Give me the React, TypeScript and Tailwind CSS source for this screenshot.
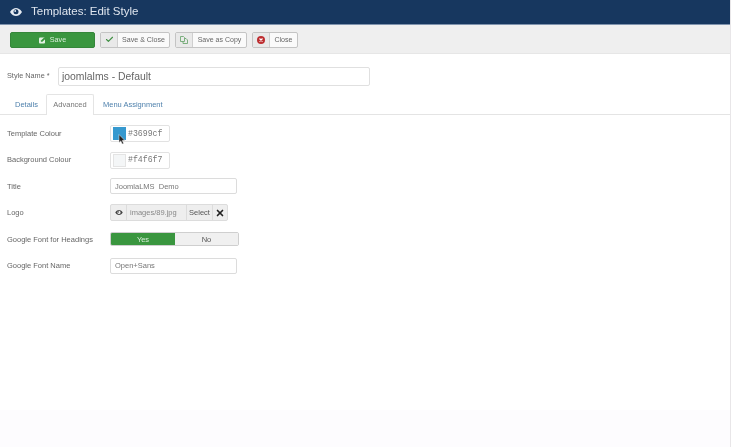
import { Check, X } from "lucide-react";

const sans = "font-['Liberation_Sans',Arial,sans-serif]";

function EyeGlyph({ width, height, colour, pupil }: { width: number; height: number; colour: string; pupil: string }) {
  return (
    <svg width={width} height={height} viewBox="0 0 12 8">
      <path d="M0 4 C2 1 4 0 6 0 C8 0 10 1 12 4 C10 7 8 8 6 8 C4 8 2 7 0 4 Z" fill={colour} />
      <circle cx="6" cy="3.8" r="2.5" fill={pupil} />
      <circle cx="5.2" cy="3" r="0.9" fill={colour} />
    </svg>
  );
}

function ToolButton({ icon, label, width, text }: { icon: React.ReactNode; label: string; width: string; text: string }) {
  return (
    <div className={`flex h-[16px] ${width} items-stretch rounded-[2px] border border-[#c4c4c4] bg-[#fafafa]`}>
      <div className="flex w-[17px] items-center justify-center border-r border-[#cfcfcf] bg-[#e9e9e9]">{icon}</div>
      <div className={`flex flex-1 items-center justify-center pt-[1px] ${text} text-[#666]`}>{label}</div>
    </div>
  );
}

function Row({ label, children }: { label: string; children: React.ReactNode }) {
  return (
    <div className="flex h-[26.4px] items-center">
      <div className="w-[103px] text-[7.5px] text-[#666]">{label}</div>
      {children}
    </div>
  );
}

function ColourInput({ colour, value, border, children }: { colour: string; value: string; border: string; children?: React.ReactNode }) {
  return (
    <div className="relative flex h-[17px] w-[60px] items-center rounded-[2px] border border-[#e2e2e2] bg-white">
      <div className={`ml-[2px] h-[13px] w-[13px] border ${colour} ${border}`} />
      <span className="ml-[2px] font-['Liberation_Mono',monospace] text-[8.2px] text-[#777]">{value}</span>
      {children}
    </div>
  );
}

function TextField({ value }: { value: string }) {
  return (
    <div className="flex h-[16px] w-[127px] items-center whitespace-pre rounded-[2px] border border-[#dcdcdc] bg-white pl-[4px] text-[7.5px] text-[#777]">
      {value}
    </div>
  );
}

export default function App() {
  return (
    <div className={`${sans} relative h-[447px] w-[731px] overflow-hidden bg-white blur-[0.35px]`}>
      <header className="flex h-[25px] items-center border-b border-[#7f93ad] bg-[#17375f] pl-[10px] text-white">
        <EyeGlyph width={12} height={8} colour="#e6ebf2" pupil="#17375f" />
        <h1 className="ml-[9px] text-[11.5px] text-[#dfe5ee]">Templates: Edit Style</h1>
      </header>

      <div className="flex h-[29px] items-center gap-[5px] border-b border-[#e6e6e6] bg-[#efefef] pl-[10px] pt-[1px]">
        <div className="flex h-[16px] w-[85px] items-center justify-center gap-[4px] rounded-[2px] border border-[#35863a] bg-[#3a963f] pt-[1px] text-[7.2px] text-[#d9edda]">
          <svg width="7" height="7" viewBox="0 0 7 7">
            <rect x="0" y="0.5" width="6" height="6" rx="1" fill="#e4f1e4" />
            <path d="M1.8 4.8 L2 3.4 L5.4 0.2 L6.8 1.4 L3.4 4.8 Z" fill="#3a963f" />
          </svg>
          Save
        </div>
        <ToolButton width="w-[70px]" text="text-[7.1px]" label="Save & Close" icon={<Check size={9} strokeWidth={3} className="text-[#3f8f43]" />} />
        <ToolButton
          width="w-[72px]"
          text="text-[7px]"
          label="Save as Copy"
          icon={
            <svg width="8" height="8" viewBox="0 0 8 8" fill="none" stroke="#6fa873" strokeWidth="0.9">
              <path d="M0.5 0.5 H3.5 L4.5 1.5 V5.5 H0.5 Z" />
              <path d="M4.5 2.5 H6 L7.5 4 V7.5 H3 V5.5" />
            </svg>
          }
        />
        <ToolButton
          width="w-[46px]"
          text="text-[7.1px]"
          label="Close"
          icon={
            <svg width="8" height="8" viewBox="0 0 8 8">
              <circle cx="4" cy="4" r="4" fill="#bd2c2f" />
              <path d="M2.5 2.5 L5.5 5.5 M5.5 2.5 L2.5 5.5" stroke="#fff" strokeWidth="1.2" />
            </svg>
          }
        />
      </div>

      <div className="flex items-center pl-[7px] pt-[13px]">
        <label className="w-[51px] text-[7.3px] text-[#666]">Style Name *</label>
        <div className="flex h-[19px] w-[312px] items-center rounded-[2px] border border-[#e0e0e0] bg-white pl-[3px] text-[10.4px] text-[#666]">
          joomlalms - Default
        </div>
      </div>

      <nav className="mt-[8px] flex h-[21px] items-end border-b border-[#e4e4e4] text-[7.5px]">
        <div className="flex h-[19px] w-[46px] items-center pl-[15px] text-[#5082ad]">Details</div>
        <div className="mb-[-1px] flex h-[21px] w-[48px] items-center justify-center rounded-t-[2px] border border-b-0 border-[#e4e4e4] bg-white text-[#777]">Advanced</div>
        <div className="ml-[9px] flex h-[19px] items-center text-[#5082ad]">Menu Assignment</div>
      </nav>

      <div className="pl-[7px] pt-[5.5px]">
        <Row label="Template Colour">
          <ColourInput colour="bg-[#3699cf]" value="#3699cf" border="border-[#3699cf]">
            <svg className="absolute left-[7px] top-[8px]" width="8" height="11" viewBox="0 0 8 11">
              <path d="M1 0.5 L1 8.5 L2.8 6.9 L4.2 10 L5.6 9.4 L4.3 6.4 L6.7 6.3 Z" fill="#222" stroke="#eee" strokeWidth="0.5" />
            </svg>
          </ColourInput>
        </Row>
        <Row label="Background Colour">
          <ColourInput colour="bg-[#f4f6f7]" value="#f4f6f7" border="border-[#e4e4e4]" />
        </Row>
        <Row label="Title">
          <TextField value="JoomlaLMS  Demo" />
        </Row>
        <Row label="Logo">
          <div className="flex h-[17px] w-[118px] items-stretch rounded-[2px] border border-[#dcdcdc] bg-[#eeeeee] text-[7.5px] text-[#777]">
            <div className="flex w-[16px] items-center justify-center border-r border-[#dcdcdc]">
              <EyeGlyph width={8} height={5} colour="#444" pupil="#eee" />
            </div>
            <div className="flex w-[59px] items-center pl-[3px] text-[#888]">images/89.jpg</div>
            <div className="flex w-[27px] items-center justify-center border-x border-[#dcdcdc] text-[#555]">Select</div>
            <div className="flex flex-1 items-center justify-center">
              <X size={10} strokeWidth={4} className="text-[#222]" />
            </div>
          </div>
        </Row>
        <Row label="Google Font for Headings">
          <div className="flex h-[14px] w-[129px] overflow-hidden rounded-[2px] border border-[#cfcfcf] text-[7.5px]">
            <div className="flex w-[64px] items-center justify-center bg-[#3a963f] text-[#d9edda]">Yes</div>
            <div className="flex flex-1 items-center justify-center bg-[#f0f0f0] text-[#555]">No</div>
          </div>
        </Row>
        <Row label="Google Font Name">
          <TextField value="Open+Sans" />
        </Row>
      </div>

      <div className="absolute bottom-0 left-0 h-[37px] w-full bg-[#fdfcfe]" />
      <div className="absolute right-0 top-0 h-full w-px bg-[#e8e6e8]" />
    </div>
  );
}
